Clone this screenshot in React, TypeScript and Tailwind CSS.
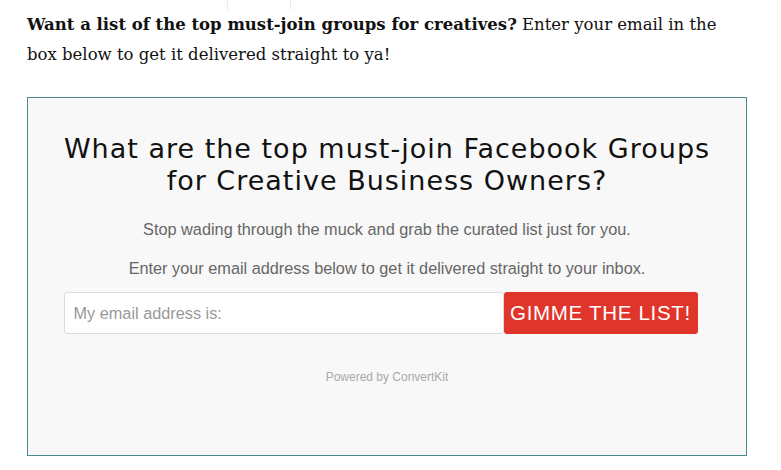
import React from "react";

export default function App() {
  return (
    <div className="w-[781px] h-[470px] bg-white overflow-hidden relative">
      <div className="ml-[227px] w-[64px] h-[10px] border-l border-r border-[#ececec]" />
      <div className="pl-[27px]">
        <p
          className="w-[700px] text-[16.5px] leading-[30px] text-[#111]"
          style={{ fontFamily: '"DejaVu Serif", serif' }}
        >
          <strong className="font-bold">Want a list of the top must-join groups for creatives?</strong>{" "}
          Enter your email in the box below to get it delivered straight to ya!
        </p>
      </div>
      <div className="absolute left-[27px] top-[97px] w-[720px] h-[359px] border border-[#4a8b8e] bg-[#f8f8f8]">
        <div className="flex flex-col items-center pt-[35px]">
          <h2
            className="text-[27px] leading-[32px] text-center text-[#111] tracking-[1px]"
            style={{ fontFamily: '"DejaVu Sans", sans-serif' }}
          >
            What are the top must-join Facebook Groups
            <br />
            for Creative Business Owners?
          </h2>
          <p
            className="mt-[22px] text-[16.3px] leading-[20px] text-[#666]"
            style={{ fontFamily: '"Liberation Sans", Arial, sans-serif' }}
          >
            Stop wading through the muck and grab the curated list just for you.
          </p>
          <p
            className="mt-[19px] text-[16.3px] leading-[20px] text-[#666]"
            style={{ fontFamily: '"Liberation Sans", Arial, sans-serif' }}
          >
            Enter your email address below to get it delivered straight to your inbox.
          </p>
          <div className="mt-[14px] flex w-[634px] mr-[13px]" style={{ fontFamily: '"Liberation Sans", Arial, sans-serif' }}>
            <div className="w-[440px] h-[42px] bg-white border border-[#dcdcdc] rounded-[3px] flex items-center pl-[9px] text-[16.3px] text-[#999]">
              My email address is:
            </div>
            <button className="w-[194px] h-[42px] bg-[#e0352a] rounded-[3px] text-white text-[20.5px] tracking-[0.7px]">
              GIMME THE LIST!
            </button>
          </div>
          <p
            className="mt-[34px] text-[12px] text-[#aaa]"
            style={{ fontFamily: '"Liberation Sans", Arial, sans-serif' }}
          >
            Powered by ConvertKit
          </p>
        </div>
      </div>
    </div>
  );
}
